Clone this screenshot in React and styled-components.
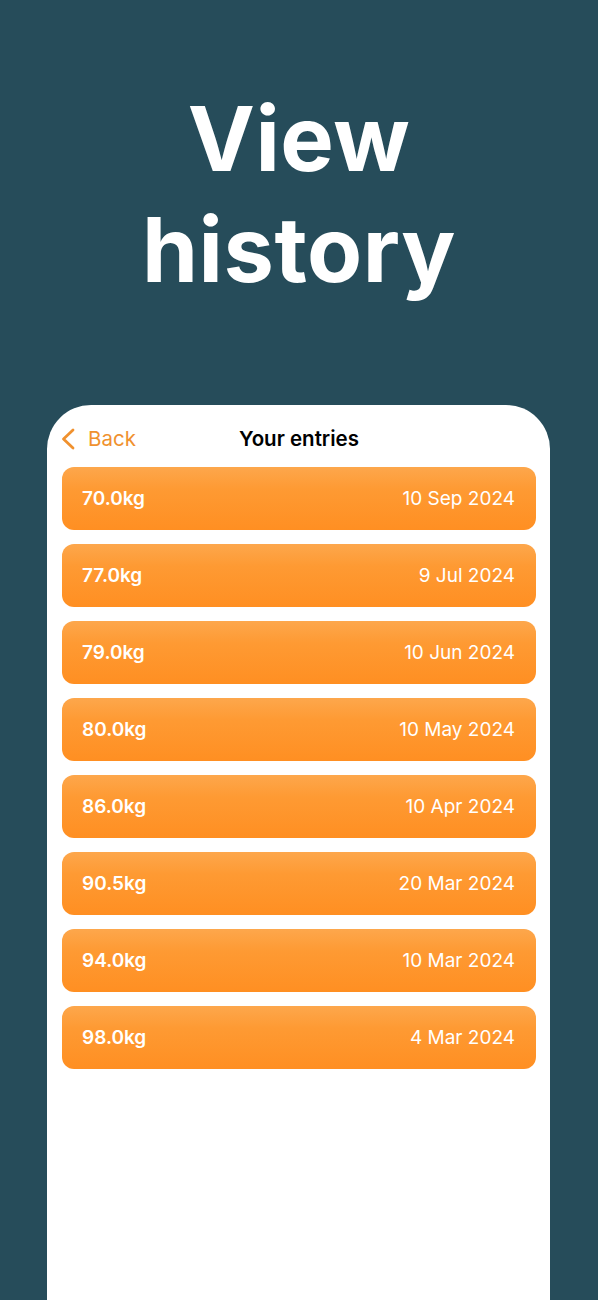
import React from "react";
import styled, { createGlobalStyle } from "styled-components";

const Global = createGlobalStyle`
  html, body { margin: 0; padding: 0; background: #264c5a; }
  body { font-family: Inter, "Noto Sans", sans-serif; -webkit-font-smoothing: antialiased; }
`;

const Page = styled.div`
  width: 598px;
  height: 1300px;
  background: #264c5a;
  display: flex;
  flex-direction: column;
  align-items: center;
  overflow: hidden;
`;

const Title = styled.h1`
  margin: 83px 0 0;
  color: #ffffff;
  font-size: 90px;
  font-weight: 700;
  line-height: 111px;
  text-align: center;
  letter-spacing: 0.5px;
`;

const Card = styled.div`
  margin-top: 100px;
  width: 503px;
  flex: 1;
  background: #ffffff;
  border-radius: 44px 44px 0 0;
  display: flex;
  flex-direction: column;
  padding: 0 14px 0 15px;
  box-sizing: border-box;
  align-self: flex-start;
  margin-left: 47px;
`;

const NavBar = styled.div`
  position: relative;
  height: 62px;
  display: flex;
  align-items: center;
  justify-content: center;
`;

const BackButton = styled.div`
  position: absolute;
  left: -1px;
  top: 21px;
  display: flex;
  align-items: center;
  gap: 13px;
  color: #f0912e;
  font-size: 20.5px;
`;

const NavTitle = styled.div`
  font-size: 20.5px;
  font-weight: 600;
  color: #000;
  margin-top: 4px;
`;

const List = styled.div`
  display: flex;
  flex-direction: column;
  gap: 14px;
`;

const Row = styled.div`
  height: 63px;
  flex: 0 0 63px;
  border-radius: 12px;
  background: linear-gradient(180deg, #fda74c 0%, #fe9a33 35%, #ff8f22 100%);
  display: flex;
  align-items: center;
  justify-content: space-between;
  padding: 0 21px 0 20px;
  color: #ffffff;
  font-size: 19px;
`;

const Weight = styled.span`
  font-weight: 600;
`;

const DateText = styled.span`
  font-weight: 400;
`;

const entries = [
  ["70.0kg", "10 Sep 2024"],
  ["77.0kg", "9 Jul 2024"],
  ["79.0kg", "10 Jun 2024"],
  ["80.0kg", "10 May 2024"],
  ["86.0kg", "10 Apr 2024"],
  ["90.5kg", "20 Mar 2024"],
  ["94.0kg", "10 Mar 2024"],
  ["98.0kg", "4 Mar 2024"],
];

export default function App() {
  return (
    <Page>
      <Global />
      <Title>
        View
        <br />
        history
      </Title>
      <Card>
        <NavBar>
          <BackButton>
            <svg width="14" height="22" viewBox="0 0 14 22" fill="none">
              <path d="M12 2 L2.5 11 L12 20" stroke="#f0912e" strokeWidth="2.8" strokeLinecap="round" strokeLinejoin="round" />
            </svg>
            Back
          </BackButton>
          <NavTitle>Your entries</NavTitle>
        </NavBar>
        <List>
          {entries.map(([w, d]) => (
            <Row key={d}>
              <Weight>{w}</Weight>
              <DateText>{d}</DateText>
            </Row>
          ))}
        </List>
      </Card>
    </Page>
  );
}
